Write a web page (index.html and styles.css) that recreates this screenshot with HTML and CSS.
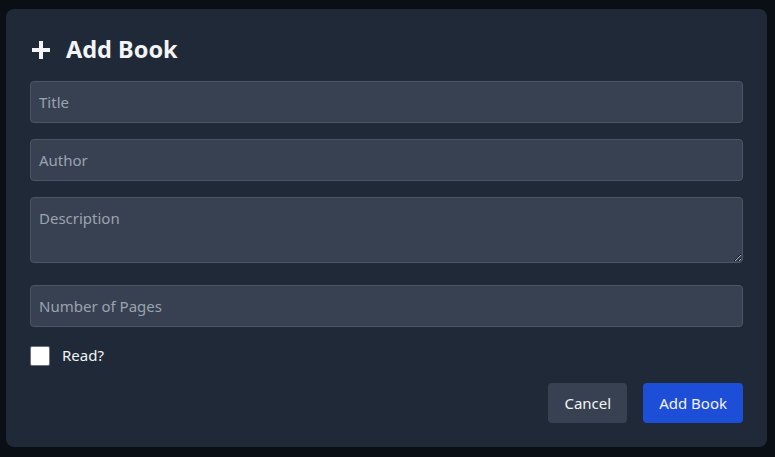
FILE: index.html
```html
<!DOCTYPE html>
<html lang="en">
<head>
<meta charset="utf-8">
<title>Add Book</title>
<link rel="stylesheet" href="styles.css">
</head>
<body>
<div class="page">
  <form class="modal">
    <h2 class="heading">
      <svg class="plus" width="22" height="22" viewBox="0 0 22 22" aria-hidden="true">
        <path d="M11 2v18M2 11h18" stroke="#f3f4f6" stroke-width="4" stroke-linecap="butt"/>
      </svg>
      <span>Add Book</span>
    </h2>
    <input class="field" type="text" placeholder="Title">
    <input class="field" type="text" placeholder="Author">
    <textarea class="field area" rows="2" placeholder="Description"></textarea>
    <input class="field" type="number" placeholder="Number of Pages">
    <label class="check-row">
      <span class="box"></span>
      <span class="check-label">Read?</span>
    </label>
    <div class="actions">
      <button type="button" class="btn btn-cancel">Cancel</button>
      <button type="button" class="btn btn-primary">Add Book</button>
    </div>
  </form>
</div>
</body>
</html>
```

FILE: styles.css
```css
* { box-sizing: border-box; }
html, body { margin: 0; height: 100%; }
body {
  background: #0a0e15;
  font-family: "Noto Sans", "Open Sans", sans-serif;
  color: #f3f4f6;
}
.page {
  padding: 9px 8px 0 6px;
}
.modal {
  background: #1f2937;
  border-radius: 8px;
  padding: 24px;
  display: flex;
  flex-direction: column;
}
.heading {
  margin: 0 0 16px;
  height: 32px;
  display: flex;
  align-items: center;
  gap: 14px;
  font-size: 23.5px;
  font-weight: 700;
  line-height: 32px;
  color: #f3f4f6;
}
.plus { display: block; margin-top: 1px; }
.field {
  display: block;
  width: 100%;
  height: 42px;
  margin: 0 0 16px;
  padding: 8px 8px;
  background: #374151;
  border: 1px solid #4b5563;
  border-radius: 4px;
  color: #f3f4f6;
  font-family: inherit;
  font-size: 15px;
  line-height: 24px;
  outline: none;
}
.field::placeholder { color: #9ca3af; opacity: 1; }
.area {
  height: 66px;
  margin-bottom: 22px;
  resize: vertical;
}
.check-row {
  display: flex;
  align-items: center;
  height: 24px;
  margin-bottom: 16px;
}
.box {
  width: 20px;
  height: 20px;
  background: #fff;
  border: 1px solid #6b7280;
  border-radius: 2px;
  margin-top: 1px;
}
.check-label {
  margin-left: 12px;
  font-size: 15px;
  color: #f3f4f6;
}
.actions {
  display: flex;
  justify-content: flex-end;
  gap: 16px;
}
.btn {
  height: 40px;
  padding: 0 16px;
  border: none;
  border-radius: 4px;
  font-family: inherit;
  font-size: 15px;
  color: #f3f4f6;
}
.btn-cancel { background: #374151; }
.btn-primary { background: #1d4ed8; }
```
